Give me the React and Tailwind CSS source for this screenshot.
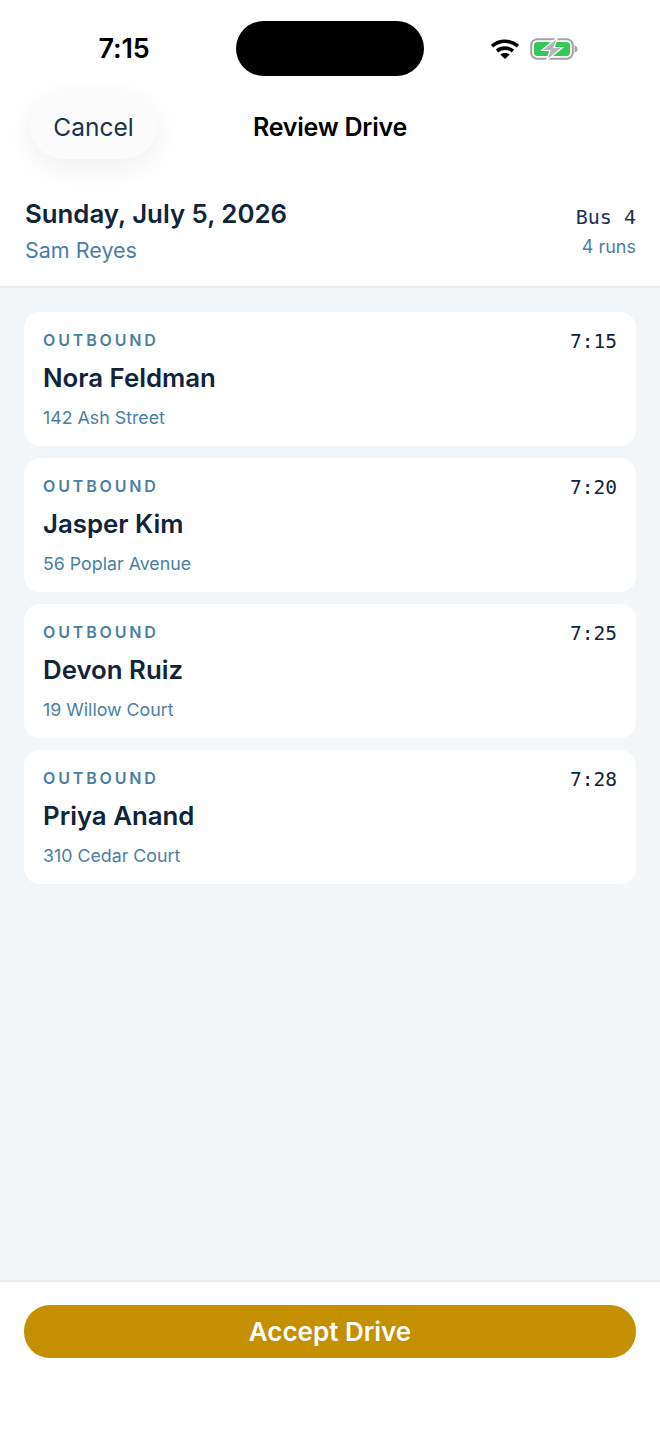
const rides = [
  { name: 'Nora Feldman', address: '142 Ash Street', time: '7:15' },
  { name: 'Jasper Kim', address: '56 Poplar Avenue', time: '7:20' },
  { name: 'Devon Ruiz', address: '19 Willow Court', time: '7:25' },
  { name: 'Priya Anand', address: '310 Cedar Court', time: '7:28' },
];

function StatusBar() {
  return (
    <div className="h-[93px] shrink-0 flex pt-[21px] px-[78px] relative">
      <div className="w-[92px] h-[55px] pt-[2px] flex items-center justify-center text-[27px] font-semibold text-black tracking-[-0.2px]">7:15</div>
      <div className="w-[188px] h-[55px] rounded-full bg-black ml-[66px]" />
      <div className="h-[55px] flex items-center ml-[66px] gap-[10px]">
        <svg width="30" height="22" viewBox="0 0 30 22" fill="none">
          <path d="M2 8.2C9.5 1.6 20.5 1.6 28 8.2" stroke="#000" strokeWidth="3.6" />
          <path d="M7 13C11.6 9.2 18.4 9.2 23 13" stroke="#000" strokeWidth="3.6" />
          <path d="M15 21L10.3 16.4C13 14.4 17 14.4 19.7 16.4Z" fill="#000" />
        </svg>
        <svg width="48" height="24" viewBox="0 0 48 24" fill="none">
          <rect x="1.2" y="2.2" width="41.6" height="19.6" rx="6" fill="#fff" stroke="#a3a3a3" strokeWidth="2" />
          <rect x="4" y="5" width="36" height="14" rx="3.5" fill="#34c759" />
          <path d="M44.5 8.5C46.5 9 47.5 10.4 47.5 12C47.5 13.6 46.5 15 44.5 15.5Z" fill="#a3a3a3" />
          <path d="M27.5 0.5L11.5 13.5H20L16.5 23.5L32.5 10.5H24Z" fill="#b5b5b5" stroke="#fff" strokeWidth="1.2" />
        </svg>
      </div>
    </div>
  );
}

export default function App() {
  return (
    <div className="w-[660px] h-[1434px] flex flex-col bg-[#f3f6f9] font-['Inter',sans-serif] overflow-hidden">
      <div className="bg-white border-b-2 border-[#e6e9ed] shrink-0">
        <StatusBar />

        {/* Nav */}
        <div className="relative h-[66px] pt-[3px] flex items-center justify-center">
          <button className="absolute left-[30px] top-0 w-[127px] h-[66px] pt-[2px] rounded-[33px] bg-[#fbfbfb] shadow-[0_8px_32px_rgba(0,0,0,0.07)] text-[24.5px] text-[#1a3350]">
            Cancel
          </button>
          <h1 className="text-[25px] font-semibold text-black tracking-[-0.25px]">Review Drive</h1>
        </div>

        {/* Summary */}
        <div className="h-[127px] pl-[25px] pr-[24px] pt-[39px] flex justify-between">
          <div>
            <div className="text-[25.8px] leading-[32px] font-semibold text-[#10243a]">Sunday, July 5, 2026</div>
            <div className="text-[21.5px] leading-[28px] mt-[6px] text-[#4a7fa5]">Sam Reyes</div>
          </div>
          <div className="text-right pt-[6px]">
            <div className="font-['DejaVu_Sans_Mono',monospace] text-[20px] leading-[26px] text-[#1a3350]">Bus 4</div>
            <div className="text-[18px] leading-[24px] mt-[5px] text-[#4a7fa5]">4 runs</div>
          </div>
        </div>
      </div>

      {/* Ride list */}
      <div className="flex-1 flex flex-col gap-[12px] px-[24px] pt-[24px]">
        {rides.map((ride) => (
          <div key={ride.name} className="h-[134px] bg-white rounded-[16px] px-[19px] pt-[18px] relative">
            <div className="flex justify-between items-start">
              <div className="text-[16px] leading-[20px] font-semibold tracking-[2.85px] text-[#4a7fa5]">OUTBOUND</div>
              <div className="font-['DejaVu_Sans_Mono',monospace] text-[19.5px] leading-[24px] text-[#10243a]">{ride.time}</div>
            </div>
            <div className="text-[25.8px] leading-[34px] mt-[7px] font-semibold text-[#10243a]">{ride.name}</div>
            <div className="text-[17.8px] leading-[24px] mt-[11px] text-[#4a7fa5]">{ride.address}</div>
          </div>
        ))}
      </div>

      {/* Footer */}
      <div className="h-[154px] shrink-0 bg-white border-t-2 border-[#e6e9ed] px-[24px] pt-[23px]">
        <button className="w-full h-[53px] rounded-[26px] bg-[#c48f00] text-white text-[26px] font-semibold">
          Accept Drive
        </button>
      </div>
    </div>
  );
}
